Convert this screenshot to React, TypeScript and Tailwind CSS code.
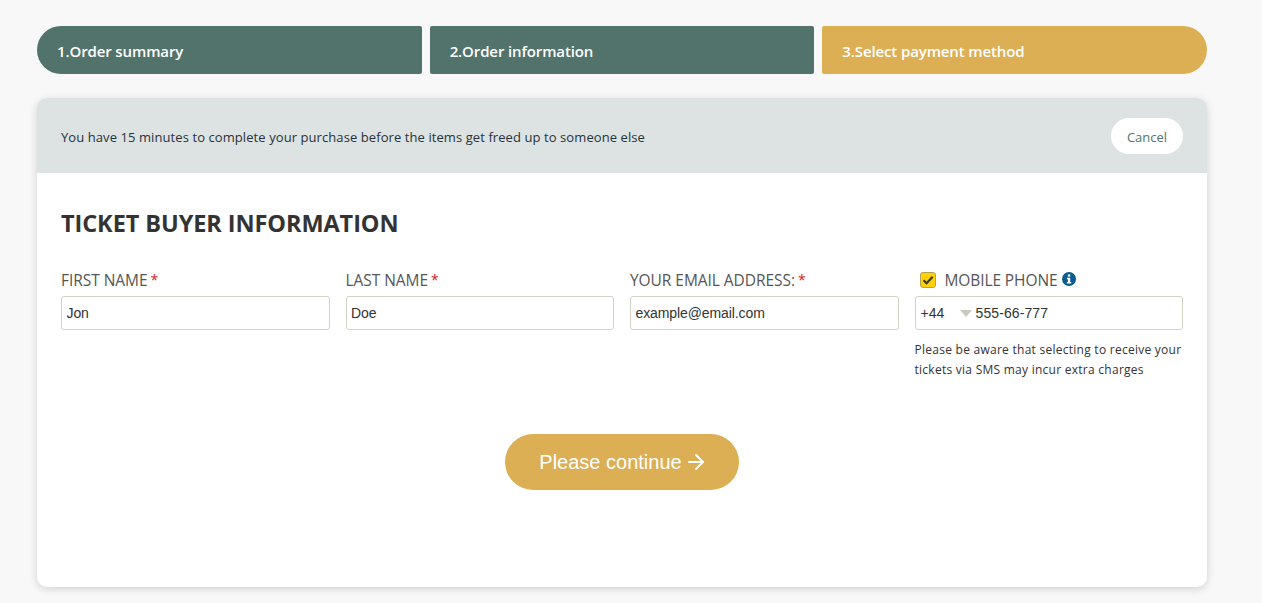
import { ArrowRight } from "lucide-react";

const sans = "font-['Open_Sans',sans-serif]";
const arial = "font-['Liberation_Sans',Arial,sans-serif]";

function Required() {
  return <span className="ml-[3px] text-[14px] text-[#d0231c]">*</span>;
}

function Field({ label, value }: { label: string; value: string }) {
  return (
    <div className="flex flex-col">
      <label className="flex h-[22px] items-center text-[15.5px] uppercase leading-[22px] tracking-[-0.05px] text-[#555]">
        {label}
        <Required />
      </label>
      <input
        readOnly
        value={value}
        className={`mt-[5px] h-[34px] w-full rounded-[3px] border border-[#d2d2c4] bg-white px-[4.5px] text-[14px] tracking-[-0.1px] text-[#333] outline-none ${arial}`}
      />
    </div>
  );
}

export default function App() {
  return (
    <div className={`min-h-[603px] bg-[#f8f8f8] pt-[26px] pb-[16px] pl-[37px] ${sans}`}>
      <div className="w-[1170px]">
        <div className="grid grid-cols-3 gap-[8px] text-[15px] font-semibold tracking-[-0.12px] text-white">
          <div className="flex h-[48px] items-center rounded-[2px] rounded-l-[24px] bg-[#52736c] pl-[20px] pt-[2px]">
            1.Order summary
          </div>
          <div className="flex h-[48px] items-center rounded-[2px] bg-[#52736c] pl-[20px] pt-[2px]">
            2.Order information
          </div>
          <div className="flex h-[48px] items-center rounded-[2px] rounded-r-[24px] bg-[#dcaf54] pl-[20px] pt-[2px]">
            3.Select payment method
          </div>
        </div>

        <div className="mt-[24px] h-[489px] overflow-hidden rounded-[10px] bg-white shadow-[0_2px_8px_rgba(0,0,0,0.16)]">
          <div className="flex h-[75px] items-center justify-between bg-[#dde3e3] px-[24px]">
            <p className="mt-[4px] text-[13px] tracking-[0.08px] text-[#27323a]">
              You have 15 minutes to complete your purchase before the items get freed up to someone else
            </p>
            <button className="h-[36px] w-[72px] rounded-[18px] bg-white pt-[4px] text-[13px] text-[#52736c]">Cancel</button>
          </div>

          <div className="px-[24px] pt-[34px]">
            <h2 className="text-[23.5px] font-bold uppercase leading-[32px] tracking-[-0.08px] text-[#333]">Ticket buyer information</h2>

            <div className="mt-[30px] grid grid-cols-4 gap-[16px]">
              <Field label="First name" value="Jon" />
              <Field label="Last name" value="Doe" />
              <Field label="Your email address:" value="example@email.com" />
              <div className="flex flex-col">
                <label className="flex h-[22px] items-center pl-[5px] text-[15.5px] uppercase leading-[22px] tracking-[-0.1px] text-[#555]">
                  <span className="flex h-[16px] w-[16px] items-center justify-center rounded-[3px] border border-[#b5a15a] bg-[#ffd200]">
                    <svg viewBox="0 0 12 12" className="h-[14px] w-[14px]">
                      <path d="M2.2 6.2 4.8 8.8 10 3.2" fill="none" stroke="#3a3a2a" strokeWidth="1.9" />
                    </svg>
                  </span>
                  <span className="ml-[9px]">Mobile phone</span>
                  <svg viewBox="0 0 14 14" className="ml-[5px] -mt-[2px] h-[14px] w-[14px]">
                    <circle cx="7" cy="7" r="7" fill="#0b5d8f" />
                    <rect x="5.9" y="2.4" width="2.3" height="2.2" fill="#fff" />
                    <path d="M4.9 5.7h3.3v4.4h1v1.5H4.9v-1.5h1V7.2h-1z" fill="#fff" />
                  </svg>
                </label>
                <div className={`mt-[5px] flex h-[34px] items-center rounded-[3px] border border-[#d2d2c4] bg-white pl-[5px] text-[14px] text-[#333] ${arial}`}>
                  <span className="w-[39px]">+44</span>
                  <span className="h-0 w-0 border-x-[6px] border-t-[7px] border-x-transparent border-t-[#c9c9bd]" />
                  <span className="ml-[4px] tracking-[0.1px]">555-66-777</span>
                </div>
                <p className="mt-[10px] text-[12px] leading-[20px] tracking-[0.26px] text-[#333]">
                  Please be aware that selecting to receive your tickets via SMS may incur extra charges
                </p>
              </div>
            </div>

            <div className="mt-[54px] flex justify-center">
              <button className={`flex h-[56px] w-[234px] items-center justify-center gap-[2px] rounded-[28px] bg-[#dcaf54] pl-[3px] text-[20px] text-white ${arial}`}>
                Please continue
                <ArrowRight className="h-[24px] w-[24px]" strokeWidth={1.9} />
              </button>
            </div>
          </div>
        </div>
      </div>
    </div>
  );
}
